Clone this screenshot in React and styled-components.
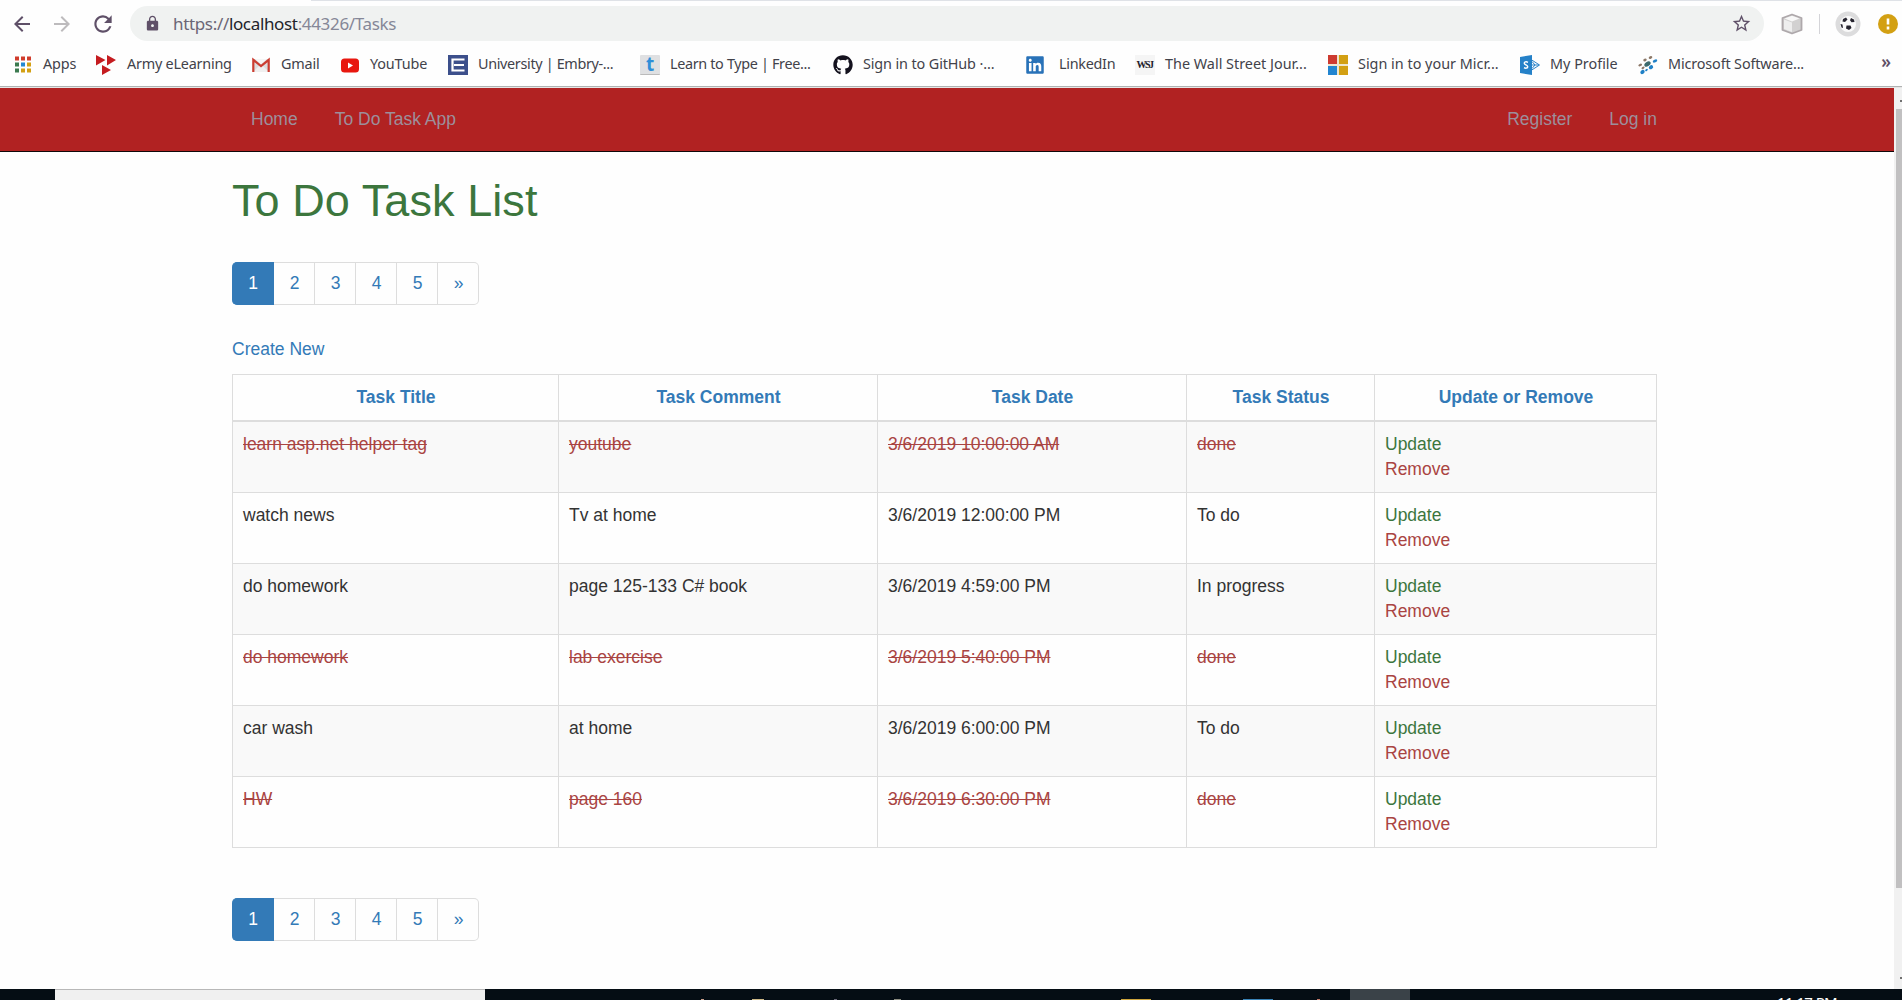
import React from "react";
import styled, { createGlobalStyle } from "styled-components";
import { MdArrowBack, MdArrowForward, MdRefresh, MdLock, MdStarBorder } from "react-icons/md";
import { FaGithub, FaLinkedin } from "react-icons/fa";

const Global = createGlobalStyle`
  *, *::before, *::after { box-sizing: border-box; }
  html, body { margin: 0; height: 1000px; overflow: hidden; background: #fefefe; }
`;

const Screen = styled.div`
  width: 1902px;
  height: 1000px;
  display: flex;
  flex-direction: column;
  overflow: hidden;
  background: #fefefe;
  font-family: "Liberation Sans", Arial, sans-serif;
  font-size: 17.5px;
  line-height: 25px;
  color: #333;
`;

/* ---------- browser chrome ---------- */
const Chrome = styled.header`
  flex: none;
  height: 88px;
  border-bottom: 1px solid #e6e6e6;
  box-shadow: inset 0 -1px 0 #b0b2b2;
  font-family: "Noto Sans", "Open Sans", sans-serif;
`;

const TabEdge = styled.div`
  height: 1px;
  margin-left: 311px;
  background: #dfe2e7;
`;

const Toolbar = styled.div`
  height: 45px;
  display: flex;
  align-items: center;
  padding: 0 0 0 10px;
`;

const ToolButton = styled.span`
  flex: none;
  width: ${(p) => p.$w}px;
  display: flex;
  align-items: center;
  color: ${(p) => p.$color || "#5f5068"};
`;

const AddressBar = styled.div`
  flex: none;
  width: 1634px;
  height: 35px;
  padding: 0 12px 0 14px;
  display: flex;
  align-items: center;
  border-radius: 18px;
  background: #f0f2f1;
  color: #5f5068;
`;

const Url = styled.span`
  flex: 1;
  margin-left: 12px;
  font-size: 17px;
  letter-spacing: -0.34px;
  white-space: nowrap;
  color: #858797;
`;
const Scheme = styled.span`color: #6b6676;`;
const Host = styled.span`color: #22222a;`;

const Divider = styled.span`
  width: 1px;
  height: 20px;
  margin: 0 15px 0 16px;
  background: #d4d4d8;
`;

const Extension = styled.span`
  display: flex;
  margin-left: ${(p) => p.$gap || 0}px;
`;

const Bookmarks = styled.nav`
  height: 37px;
  display: flex;
  align-items: center;
  padding-left: 13px;
`;

const Bookmark = styled.a`
  flex: none;
  width: ${(p) => p.$w}px;
  display: flex;
  align-items: center;
  gap: ${(p) => p.$gap || 10}px;
  font-size: 14.4px;
  letter-spacing: ${(p) => p.$ls || 0}px;
  line-height: 20px;
  white-space: nowrap;
  color: #42424a;
`;

const BookmarkLabel = styled.span`
  padding-bottom: 2px;
`;

const Favicon = styled.span`
  flex: none;
  width: 20px;
  height: 20px;
  display: flex;
  align-items: center;
  justify-content: center;
`;

const LetterIcon = styled(Favicon)`
  border-radius: 1px;
  background: #dfe0e2;
  border-bottom: 1px solid #bbb;
  color: #2f8fd8;
  font: bold 19px/16px "Open Sans", sans-serif;
`;

const WsjIcon = styled(Favicon)`
  background: #f5f5f5;
  color: #22202a;
  font: bold 10px/20px "Liberation Serif", serif;
  letter-spacing: -1.6px;
  padding-right: 1px;
`;

const Overflow = styled.span`
  margin-left: auto;
  margin-right: 11px;
  font-size: 17px;
  font-weight: 600;
  line-height: 20px;
  padding-bottom: 5px;
  color: #5f5068;
`;

/* ---------- page ---------- */
const Viewport = styled.div`
  flex: none;
  height: 901px;
  display: flex;
`;

const Page = styled.div`
  width: 1894px;
`;

const NavBar = styled.nav`
  height: 64px;
  padding: 0 237px 0 251px;
  display: flex;
  align-items: center;
  background: #b12222;
  border-bottom: 1px solid #10080a;
`;

const NavLink = styled.a`
  margin-left: ${(p) => (p.$push ? "auto" : p.$gap ? `${p.$gap}px` : 0)};
  color: #9d8f9b;
`;

const Main = styled.main`
  width: 1424px;
  margin-left: 232px;
  padding-top: 24px;
`;

const Title = styled.h1`
  margin: 0;
  font-size: 45px;
  letter-spacing: 0.08px;
  line-height: 50px;
  font-weight: 400;
  color: #3c763d;
`;

const Pager = styled.ul`
  display: flex;
  width: max-content;
  margin: 0;
  margin-top: ${(p) => p.$top}px;
  padding: 0;
  list-style: none;
`;

const PageItem = styled.li`
  width: 41px;
  height: 43px;
  display: flex;
  align-items: center;
  justify-content: center;
  padding: 0 0 1px 1px;
  border: 1px solid #ddd;
  border-left-width: 0;
  color: #337ab7;
  &:first-child {
    width: 42px;
    border-color: #337ab7;
    border-radius: 5px 0 0 5px;
    background: #337ab7;
    color: #fff;
  }
  &:last-child { border-radius: 0 5px 5px 0; }
`;

const CreateLink = styled.a`
  display: block;
  margin: 32px 0 12px;
  color: #337ab7;
`;

const TaskTable = styled.table`
  width: 1425px;
  table-layout: fixed;
  border-collapse: collapse;
  border: 1px solid #ddd;
`;

const Col = styled.col`width: ${(p) => p.$w}px;`;

const HeadCell = styled.th`
  height: 46px;
  padding: 1px 0 0 1px;
  border: 1px solid #ddd;
  border-bottom-width: 2px;
  color: #337ab7;
  font-weight: 700;
`;

const Row = styled.tr`
  height: ${(p) => (p.$first ? 72 : 71)}px;
  background: ${(p) => (p.$striped ? "#f9f9f9" : "transparent")};
`;

const Cell = styled.td`
  padding: 10px 10px 0;
  border: 1px solid #ddd;
  vertical-align: top;
  color: ${(p) => (p.$done ? "#a94442" : "#333")};
  text-decoration: ${(p) => (p.$done ? "line-through" : "none")};
`;

const Action = styled.a`
  display: block;
  color: ${(p) => (p.$danger ? "#a94442" : "#3c763d")};
`;

const Scrollbar = styled.div`
  width: 8px;
  height: 901px;
  padding-left: 2px;
  background: #f1f1f1;
  display: flex;
  flex-direction: column;
  align-items: flex-end;
`;
const Thumb = styled.div`
  width: 6px;
  height: 779px;
  background: #c1c0c1;
`;
const Arrow = styled.div`
  width: 2px;
  height: 2px;
  margin: ${(p) => p.$m};
  background: #707070;
`;

/* ---------- taskbar ---------- */
const Taskbar = styled.footer`
  flex: none;
  height: 11px;
  display: flex;
  overflow: hidden;
  background: #050d14;
`;
const SearchBox = styled.div`
  flex: none;
  width: 430px;
  margin-left: 55px;
  background: #f0f0f0;
  border-top: 1px solid #b8b8b8;
`;
const Tip = styled.span`
  flex: none;
  align-self: flex-end;
  width: ${(p) => p.$w}px;
  height: 1px;
  margin-left: ${(p) => p.$gap}px;
  background: ${(p) => p.$c};
`;
const ActiveApp = styled.span`
  flex: none;
  width: 60px;
  margin-left: 30px;
  background: #3a4248;
`;
const Clock = styled.span`
  flex: none;
  margin-left: 367px;
  padding-top: 3px;
  font: 15px/20px "Noto Sans", sans-serif;
  letter-spacing: -0.6px;
  white-space: nowrap;
  color: #fff;
`;

const AppsIcon = () => (
  <svg width="20" height="20" viewBox="0 0 20 20">
    {["#d03c2c", "#d03c2c", "#d03c2c", "#3b7a4f", "#2488d2", "#d3a013", "#3b7a4f", "#d3a013", "#d3a013"].map((c, i) => (
      <rect key={i} x={2 + (i % 3) * 6} y={1.5 + Math.floor(i / 3) * 6} width="4" height="4" fill={c} />
    ))}
  </svg>
);

const ArmyIcon = () => (
  <svg width="20" height="20" viewBox="0 0 20 20" fill="#c51c20">
    <path d="M0 0 9.500 5 0 10.500zM11 0l9 5-9 5.500zM6 10l9 5-9 5z" />
  </svg>
);

const GmailIcon = () => (
  <svg width="20" height="20" viewBox="0 0 20 20">
    <path d="M2 4h16v13H2z" fill="#dddcdd" />
    <path d="M2 17 10 9l8 8" fill="#f0efef" />
    <path d="M4 4h12l-6 5.500z" fill="#f6f5f5" />
    <path d="M2.300 17V4.800L10 11l7.700-6.200V17" fill="none" stroke="#cb3d31" strokeWidth="2.200" />
  </svg>
);

const YouTubeIcon = () => (
  <svg width="20" height="20" viewBox="0 0 20 20">
    <rect x="1" y="3.500" width="18" height="14" rx="3.500" fill="#e8170f" />
    <path d="M8 7.500v6l5-3z" fill="#fff" />
  </svg>
);

const EmbryIcon = () => (
  <svg width="20" height="20" viewBox="0 0 20 20">
    <rect width="20" height="20" fill="#3c4f8b" />
    <path d="M16.500 4.500H4.500v11h12M6 10h10" fill="none" stroke="#fff" strokeWidth="2.200" />
    <path d="M8 7.300h8.500M8 12.700h8.500" stroke="#3c4f8b" strokeWidth="1" />
  </svg>
);

const WindowsIcon = () => (
  <svg width="20" height="20" viewBox="0 0 20 20">
    <rect width="20" height="20" fill="#eee6cf" />
    <rect width="9" height="9" fill="#cd3a30" />
    <rect x="11" width="9" height="9" fill="#d3a013" />
    <rect y="11" width="9" height="9" fill="#2285d0" />
    <rect x="11" y="11" width="9" height="9" fill="#d3a013" />
  </svg>
);

const SharePointIcon = () => (
  <svg width="20" height="20" viewBox="0 0 20 20">
    <path d="M11 4.500 19.500 10 11 15.500M12 6.500l3 3.500-3 3.500M11 10h8" fill="none" stroke="#2a83c8" strokeWidth="1" />
    <path d="M0 2 12 0v20L0 18z" fill="#2581c8" />
    <path d="M8 7.300C5.800 6.200 4.300 7 4.300 8.300c0 1.700 3.400 1.500 3.400 3.400 0 1.500-2 1.900-3.700 1" fill="none" stroke="#fff" strokeWidth="1.500" />
  </svg>
);

const MoleculeIcon = () => (
  <svg width="20" height="20" viewBox="0 0 20 20">
    <g fill="#8b7767">
      <ellipse cx="7" cy="5" rx="1.800" ry="1.300" transform="rotate(-25 7 5)" />
      <ellipse cx="12.500" cy="2.500" rx="1.900" ry="1.300" transform="rotate(-25 12.500 2.500)" />
      <ellipse cx="2.200" cy="10" rx="1.900" ry="1.200" transform="rotate(-25 2.200 10)" />
      <ellipse cx="5" cy="12.800" rx="1.700" ry="1.100" transform="rotate(-35 5 12.800)" />
    </g>
    <ellipse cx="9.500" cy="9" rx="3.500" ry="2.200" fill="#3c6a6c" transform="rotate(-35 9.500 9)" />
    <g fill="#2080c6">
      <ellipse cx="17" cy="6" rx="2.400" ry="1.400" transform="rotate(-25 17 6)" />
      <ellipse cx="13" cy="12.200" rx="2.300" ry="1.900" transform="rotate(-35 13 12.200)" />
      <ellipse cx="4.500" cy="17" rx="2.400" ry="1.800" transform="rotate(-40 4.500 17)" />
      <ellipse cx="8.500" cy="15" rx="1.500" ry="1" transform="rotate(-40 8.500 15)" />
    </g>
  </svg>
);

const CubeIcon = () => (
  <svg width="22" height="22" viewBox="0 0 22 22" strokeLinejoin="round">
    <path d="M11 1.500 20.500 5v12L11 20.500 1.500 17V5z" fill="#d2d1d1" stroke="#aea8ab" strokeWidth="1.800" />
    <path d="M3 6.500 11 9.500v9.500l-8-3z" fill="#eeeeee" />
    <path d="M3.500 5.500 11 2.800 18.500 5.500 11 8.500z" fill="#f8f8f8" />
  </svg>
);

const BallIcon = () => (
  <svg width="26" height="26" viewBox="0 0 26 26">
    <circle cx="13" cy="13" r="12.500" fill="#dcdcdd" />
    <circle cx="13" cy="13" r="8" fill="#fafafa" />
    <g fill="#26242f">
      <path d="M8 8l3-1.500 1.500 2L10 11l-2.500-.5zM16 7l3 1.500.5 2.500-3 .3-1.500-2zM11.500 14.500h4l1 2.500-2.500 2-3-1.500zM5.500 13l2 .5.500 3.500-1.500-.5z" />
    </g>
  </svg>
);

const AlertIcon = () => (
  <svg width="20" height="20" viewBox="0 0 20 20">
    <circle cx="10" cy="10" r="10" fill="#d3a013" />
    <path d="M10 4.500v6M10 12.500v3" stroke="#fff" strokeWidth="2.600" />
  </svg>
);

const bookmarks = [
  { label: "Apps", w: 83, ls: -0.1, icon: <Favicon><AppsIcon /></Favicon> },
  { label: "Army eLearning", w: 155, gap: 11, ls: -0.22, icon: <Favicon><ArmyIcon /></Favicon> },
  { label: "Gmail", w: 89, ls: -0.2, icon: <Favicon><GmailIcon /></Favicon> },
  { label: "YouTube", w: 108, ls: -0.15, icon: <Favicon><YouTubeIcon /></Favicon> },
  { label: "University | Embry-...", w: 192, ls: -0.34, icon: <Favicon><EmbryIcon /></Favicon> },
  { label: "Learn to Type | Free...", w: 193, ls: -0.34, icon: <LetterIcon>t</LetterIcon> },
  { label: "Sign in to GitHub ·...", w: 192, ls: -0.12, icon: <Favicon><FaGithub size={20} color="#14121e" /></Favicon> },
  { label: "LinkedIn", w: 110, gap: 14, ls: -0.28, icon: <Favicon><FaLinkedin size={20} color="#2872b8" /></Favicon> },
  { label: "The Wall Street Jour...", w: 193, icon: <WsjIcon>WSJ</WsjIcon> },
  { label: "Sign in to your Micr...", w: 192, icon: <Favicon><WindowsIcon /></Favicon> },
  { label: "My Profile", w: 118, icon: <Favicon><SharePointIcon /></Favicon> },
  { label: "Microsoft Software...", w: 170, ls: -0.14, icon: <Favicon><MoleculeIcon /></Favicon> },
];

const columns = [
  ["Task Title", 326],
  ["Task Comment", 319],
  ["Task Date", 309],
  ["Task Status", 188],
  ["Update or Remove", 282],
];

const tasks = [
  ["learn asp.net helper tag", "youtube", "3/6/2019 10:00:00 AM", "done"],
  ["watch news", "Tv at home", "3/6/2019 12:00:00 PM", "To do"],
  ["do homework", "page 125-133 C# book", "3/6/2019 4:59:00 PM", "In progress"],
  ["do homework", "lab exercise", "3/6/2019 5:40:00 PM", "done"],
  ["car wash", "at home", "3/6/2019 6:00:00 PM", "To do"],
  ["HW", "page 160", "3/6/2019 6:30:00 PM", "done"],
];

const Pagination = ({ top }) => (
  <Pager $top={top}>
    {["1", "2", "3", "4", "5", "»"].map((p) => <PageItem key={p}>{p}</PageItem>)}
  </Pager>
);

export default function App() {
  return (
    <>
      <Global />
      <Screen>
        <Chrome>
          <TabEdge />
          <Toolbar>
            <ToolButton $w={40}><MdArrowBack size={24} /></ToolButton>
            <ToolButton $w={40} $color="#bdbbbd"><MdArrowForward size={24} /></ToolButton>
            <ToolButton $w={40}><MdRefresh size={26} /></ToolButton>
            <AddressBar>
              <MdLock size={17} />
              <Url><Scheme>https://</Scheme><Host>localhost</Host>:44326/Tasks</Url>
              <MdStarBorder size={21} />
            </AddressBar>
            <Extension $gap={17}><CubeIcon /></Extension>
            <Divider />
            <Extension><BallIcon /></Extension>
            <Extension $gap={17}><AlertIcon /></Extension>
          </Toolbar>
          <Bookmarks>
            {bookmarks.map((b) => (
              <Bookmark key={b.label} $w={b.w} $gap={b.gap} $ls={b.ls}>
                {b.icon}
                <BookmarkLabel>{b.label}</BookmarkLabel>
              </Bookmark>
            ))}
            <Overflow>»</Overflow>
          </Bookmarks>
        </Chrome>
        <Viewport>
          <Page>
            <NavBar>
              <NavLink>Home</NavLink>
              <NavLink $gap={37}>To Do Task App</NavLink>
              <NavLink $push>Register</NavLink>
              <NavLink $gap={37}>Log in</NavLink>
            </NavBar>
            <Main>
              <Title>To Do Task List</Title>
              <Pagination top={36} />
              <CreateLink>Create New</CreateLink>
              <TaskTable>
                <colgroup>{columns.map(([n, w]) => <Col key={n} $w={w} />)}</colgroup>
                <thead>
                  <tr>{columns.map(([n]) => <HeadCell key={n}>{n}</HeadCell>)}</tr>
                </thead>
                <tbody>
                  {tasks.map((t, i) => (
                    <Row key={i} $first={i === 0} $striped={i % 2 === 0}>
                      {t.map((v, j) => <Cell key={j} $done={t[3] === "done"}>{v}</Cell>)}
                      <Cell>
                        <Action>Update</Action>
                        <Action $danger>Remove</Action>
                      </Cell>
                    </Row>
                  ))}
                </tbody>
              </TaskTable>
              <Pagination top={50} />
            </Main>
          </Page>
          <Scrollbar>
            <Arrow $m="12px 0 7px" />
            <Thumb />
            <Arrow $m="89px 0 0" />
          </Scrollbar>
        </Viewport>
        <Taskbar>
          <SearchBox />
          <Tip $gap={216} $w={3} $c="#c9a08c" />
          <Tip $gap={48} $w={12} $c="#cdb887" />
          <Tip $gap={70} $w={3} $c="#6a6878" />
          <Tip $gap={57} $w={7} $c="#8c8c80" />
          <Tip $gap={220} $w={30} $c="#cfa53c" />
          <Tip $gap={92} $w={30} $c="#3a84b8" />
          <Tip $gap={44} $w={3} $c="#c07868" />
          <ActiveApp />
          <Clock>11:17 PM</Clock>
        </Taskbar>
      </Screen>
    </>
  );
}
